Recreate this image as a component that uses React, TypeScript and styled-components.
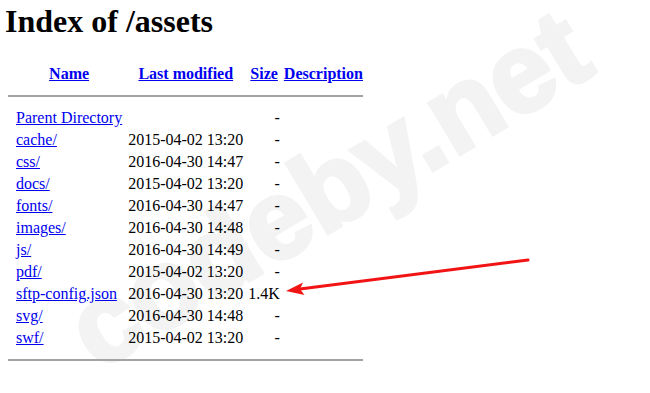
import styled, { createGlobalStyle } from "styled-components";

const GlobalStyle = createGlobalStyle`
  html, body {
    background: #fff;
  }
  body {
    margin: 0;
    font-family: "Liberation Serif", "Times New Roman", serif;
    font-size: 16px;
    color: #000;
  }
`;

const Page = styled.div`
  position: relative;
  height: 393px;
  padding: 3px 5px 0;
  box-sizing: border-box;
  overflow: hidden;
`;

const Content = styled.div`
  position: relative;
  z-index: 1;
`;

const Title = styled.h1`
  margin: 0 0 22px;
  font-size: 32px;
  font-weight: bold;
`;

const Listing = styled.table`
  border-collapse: separate;
  border-spacing: 2px;
`;

const HeadCell = styled.th<{ $gap?: number }>`
  padding: 1px ${(props) => 1 + (props.$gap || 0)}px 1px 1px;
  text-align: center;
  font-weight: bold;
  vertical-align: middle;
`;

const Cell = styled.td<{ $align?: "left" | "right"; $gap?: number }>`
  padding: 1px ${(props) => 1 + (props.$gap || 0)}px 1px 1px;
  text-align: ${(props) => props.$align || "left"};
  vertical-align: top;
  white-space: nowrap;
`;

const IconCell = styled.td`
  padding: 1px;
  width: 4px;
`;

const Link = styled.a`
  color: #0000ee;
  text-decoration: underline;
`;

const Rule = styled.hr`
  height: 0;
  margin: 8px 0;
  border: none;
  border-top: 2px solid #a3a3a3;
`;

const Watermark = styled.div`
  position: absolute;
  left: 328px;
  top: 189px;
  transform: translate(-50%, -50%) rotate(-31deg);
  font-family: "Liberation Sans", Arial, sans-serif;
  font-weight: bold;
  font-size: 112px;
  line-height: 1;
  white-space: nowrap;
  color: #f3f3f3;
  -webkit-text-stroke: 4px #f3f3f3;
  pointer-events: none;
  user-select: none;
`;

const Overlay = styled.svg`
  position: absolute;
  left: 0;
  top: 0;
  z-index: 2;
  pointer-events: none;
`;

type Entry = { name: string; date: string; size: string };

const entries: Entry[] = [
  { name: "Parent Directory", date: "", size: "-" },
  { name: "cache/", date: "2015-04-02 13:20", size: "-" },
  { name: "css/", date: "2016-04-30 14:47", size: "-" },
  { name: "docs/", date: "2015-04-02 13:20", size: "-" },
  { name: "fonts/", date: "2016-04-30 14:47", size: "-" },
  { name: "images/", date: "2016-04-30 14:48", size: "-" },
  { name: "js/", date: "2016-04-30 14:49", size: "-" },
  { name: "pdf/", date: "2015-04-02 13:20", size: "-" },
  { name: "sftp-config.json", date: "2016-04-30 13:20", size: "1.4K" },
  { name: "svg/", date: "2016-04-30 14:48", size: "-" },
  { name: "swf/", date: "2015-04-02 13:20", size: "-" },
];

const RuleRow = () => (
  <tr>
    <HeadCell colSpan={5}>
      <Rule />
    </HeadCell>
  </tr>
);

export default function App() {
  return (
    <Page>
      <GlobalStyle />
      <Watermark>codeby.net</Watermark>
      <Content>
        <Title>Index of /assets</Title>
        <Listing>
          <tbody>
            <tr>
              <HeadCell />
              <HeadCell $gap={2}>
                <Link href="#">Name</Link>
              </HeadCell>
              <HeadCell $gap={1}>
                <Link href="#">Last modified</Link>
              </HeadCell>
              <HeadCell>
                <Link href="#">Size</Link>
              </HeadCell>
              <HeadCell>
                <Link href="#">Description</Link>
              </HeadCell>
            </tr>
            <RuleRow />
            {entries.map((entry) => (
              <tr key={entry.name}>
                <IconCell />
                <Cell $gap={2}>
                  <Link href="#">{entry.name}</Link>
                </Cell>
                <Cell $gap={1}>{entry.date || "\u00a0"}</Cell>
                <Cell $align="right">{entry.size}</Cell>
                <Cell>{"\u00a0"}</Cell>
              </tr>
            ))}
            <RuleRow />
          </tbody>
        </Listing>
      </Content>
      <Overlay width="650" height="393" viewBox="0 0 650 393">
        <line x1="528" y1="260" x2="300" y2="289" stroke="#f21414" strokeWidth="3" strokeLinecap="round" />
        <polygon points="286,291 303,282.5 300,289 304.5,295" fill="#f21414" />
      </Overlay>
    </Page>
  );
}
